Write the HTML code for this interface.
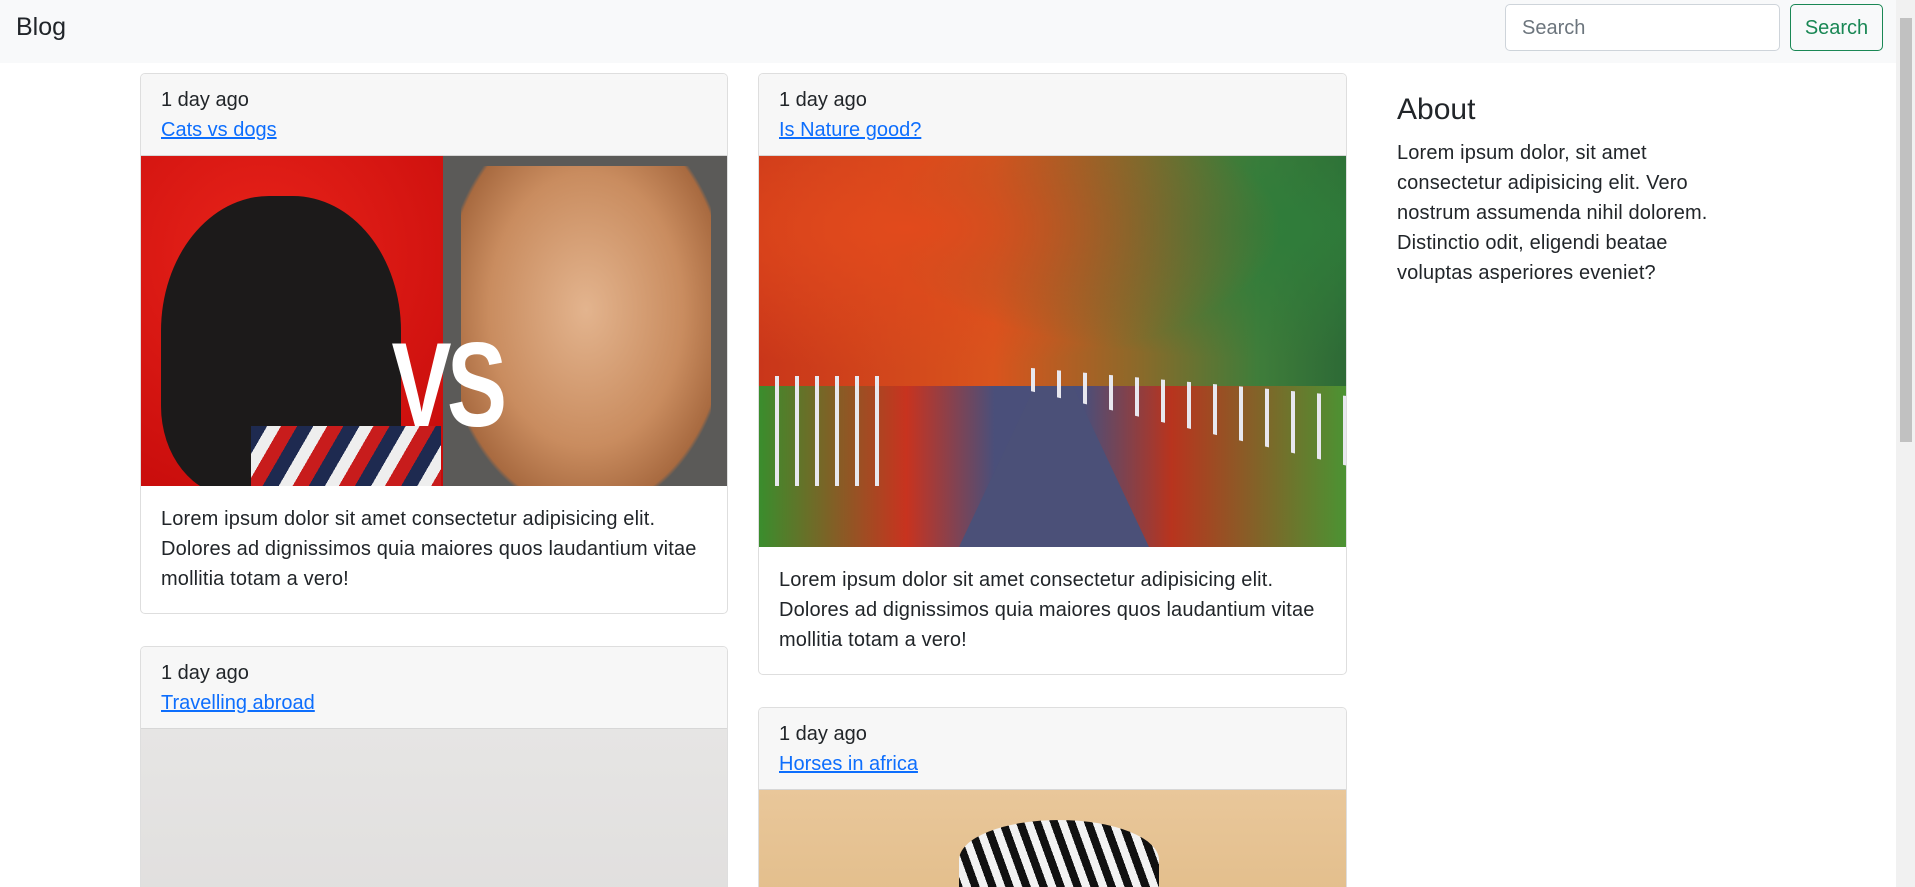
<!DOCTYPE html>
<html><head><meta charset="utf-8"><style>
*{box-sizing:border-box;margin:0;padding:0}
html{background:#fff;width:1915px;height:887px;overflow:hidden}
body{width:1915px;height:887px;overflow:hidden;background:#fff;font-family:"Liberation Sans",sans-serif;color:#212529;font-size:20px;position:relative}
.nav{position:absolute;left:0;top:0;width:1896px;height:63px;background:#f8f9fa}
.brand{position:absolute;left:16px;top:13px;font-size:25px}
.inp{position:absolute;left:1505px;top:4px;width:275px;height:47px;border:1px solid #ced4da;border-radius:5px;background:#fff;color:#6c757d;padding:12px 16px;font-size:20px}
.btn{position:absolute;left:1790px;top:4px;width:93px;height:47px;border:1px solid #198754;border-radius:5px;color:#198754;text-align:center;padding-top:12px;font-size:20px}
.sb{position:absolute;left:1896px;top:0;width:19px;height:887px;background:#f1f1f1}
.thumb{position:absolute;left:1900px;top:18px;width:12px;height:424px;background:#c1c1c1}
.card{position:absolute;border:1px solid rgba(0,0,0,.13);border-radius:5px;overflow:hidden;background:#fff}
.hd{background:#f7f7f7;height:82px;padding:11px 20px 0;line-height:30px;border-bottom:1px solid rgba(0,0,0,.13)}
.hd a{color:#0d6efd;text-decoration:underline}
.bd{padding:18px 20px;line-height:30px;letter-spacing:.15px}
.img{position:relative;overflow:hidden}
</style></head><body>
<div class="nav"><div class="brand">Blog</div><div class="inp">Search</div><div class="btn">Search</div></div>
<div class="sb"></div><div class="thumb"></div>

<div class="card" style="left:140px;top:73px;width:588px;height:541px">
<div class="hd">1 day ago<br><a>Cats vs dogs</a></div>
<div class="img" style="height:330px">
<div style="position:absolute;left:0;top:0;width:302px;height:330px;background:radial-gradient(circle at 40% 30%,#e8231a,#c50a0a)"></div>
<div style="position:absolute;left:20px;top:40px;width:240px;height:300px;background:#1c1a1a;border-radius:45% 45% 10% 30%"></div>
<div style="position:absolute;left:110px;top:270px;width:190px;height:60px;background:repeating-linear-gradient(120deg,#1e2a50 0 14px,#eee 14px 26px,#c81c1c 26px 40px)"></div>
<div style="position:absolute;left:302px;top:0;width:286px;height:330px;background:#5b5a58"></div>
<div style="position:absolute;left:320px;top:10px;width:250px;height:320px;background:radial-gradient(ellipse at 50% 45%,#e3b48e,#c98c5f 55%,#a86a40 80%,transparent 82%)"></div>
<div style="position:absolute;left:232px;top:160px;font:bold 120px 'Liberation Sans',sans-serif;color:#fff;letter-spacing:-6px;transform:scaleX(.75)">VS</div>
</div>
<div class="bd">Lorem ipsum dolor sit amet consectetur adipisicing elit. Dolores ad dignissimos quia maiores quos laudantium vitae mollitia totam a vero!</div>
</div>

<div class="card" style="left:140px;top:646px;width:588px;height:400px">
<div class="hd">1 day ago<br><a>Travelling abroad</a></div>
<div class="img" style="height:320px;background:linear-gradient(#e6e5e4,#dcdad9)"></div>
</div>

<div class="card" style="left:758px;top:73px;width:589px;height:602px">
<div class="hd">1 day ago<br><a>Is Nature good?</a></div>
<div class="img" style="height:391px;background:linear-gradient(90deg,#c9361a,#d9541d 40%,#8a6a2a 65%,#3f7d3a 85%,#2d6a36)">
<div style="position:absolute;left:0;top:0;width:589px;height:240px;background:radial-gradient(ellipse at 25% 30%,#e24a1c,transparent 60%),radial-gradient(ellipse at 85% 30%,#2f7d3a,transparent 55%)"></div>
<div style="position:absolute;left:0;top:230px;width:589px;height:161px;background:linear-gradient(90deg,#3a8d2d,#c8331f 25%,#4a4f7a 40%,#4a4f7a 55%,#b8341e 70%,#4a9433)"></div>
<div style="position:absolute;left:200px;top:230px;width:190px;height:161px;background:#4b5078;clip-path:polygon(40% 0,60% 0,100% 100%,0 100%)"></div>
<div style="position:absolute;left:0;top:220px;width:120px;height:110px;background:repeating-linear-gradient(90deg,transparent 0 16px,#e8e8ef 16px 20px)"></div>
<div style="position:absolute;left:250px;top:210px;width:339px;height:100px;background:repeating-linear-gradient(90deg,transparent 0 22px,#e8e8ef 22px 26px);clip-path:polygon(0 0,100% 30%,100% 100%,0 20%)"></div>
</div>
<div class="bd">Lorem ipsum dolor sit amet consectetur adipisicing elit. Dolores ad dignissimos quia maiores quos laudantium vitae mollitia totam a vero!</div>
</div>

<div class="card" style="left:758px;top:707px;width:589px;height:400px">
<div class="hd">1 day ago<br><a>Horses in africa</a></div>
<div class="img" style="height:320px;background:linear-gradient(#e9c79a,#d7ad70)">
<div style="position:absolute;left:200px;top:30px;width:200px;height:80px;background:repeating-linear-gradient(70deg,#111 0 8px,#f2f2f2 8px 16px);border-radius:50% 50% 0 0"></div>
</div>
</div>

<div style="position:absolute;left:1397px;top:93px;font-size:30px">About</div>
<div style="position:absolute;left:1397px;top:138px;width:320px;line-height:30px;font-size:20px;letter-spacing:.15px">Lorem ipsum dolor, sit amet consectetur adipisicing elit. Vero nostrum assumenda nihil dolorem. Distinctio odit, eligendi beatae voluptas asperiores eveniet?</div>
</body></html>
